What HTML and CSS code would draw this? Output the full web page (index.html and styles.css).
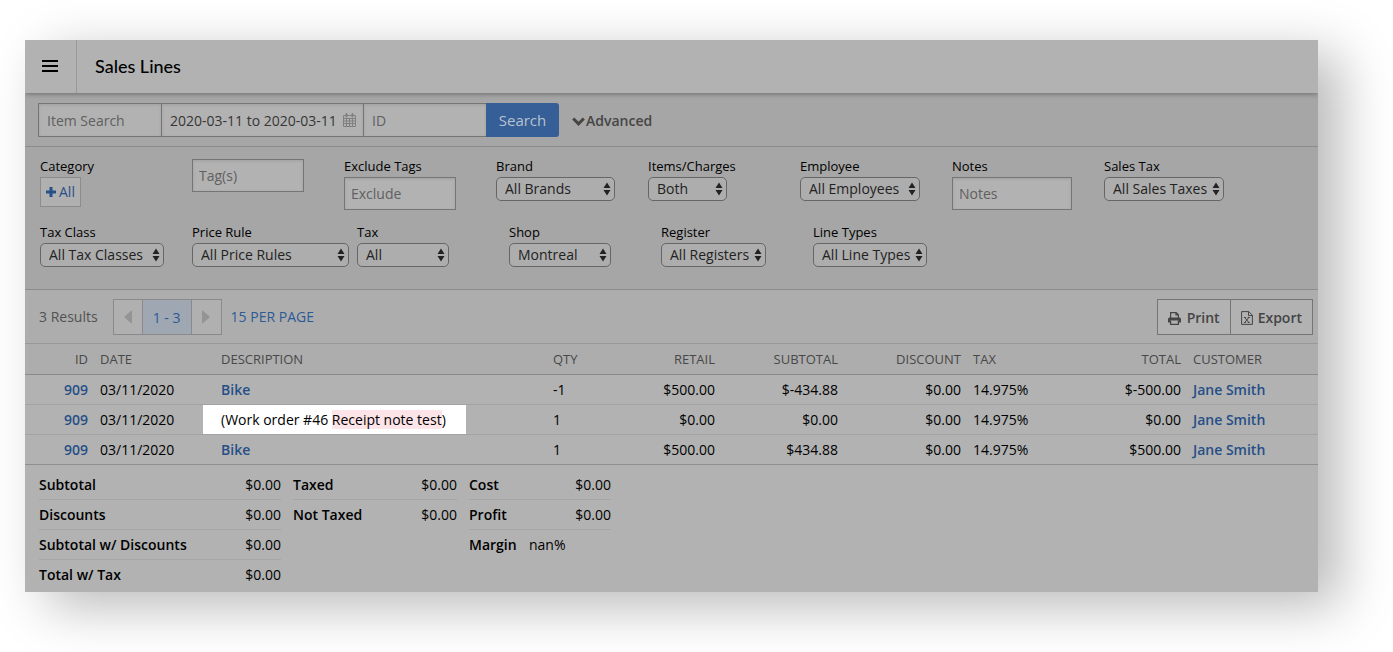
FILE: index.html
```html
<!DOCTYPE html>
<html lang="en">
<head>
<meta charset="utf-8">
<title>Sales Lines</title>
<link rel="stylesheet" href="styles.css">
</head>
<body>
<svg class="defs" aria-hidden="true">
  <symbol id="arrows" viewBox="0 0 8 14"><path d="M4 .5 7.500 6h-7zM4 13.500.5 8h7z"/></symbol>
</svg>
<main class="app">
  <header class="topbar">
    <button class="menu" type="button" aria-label="Menu">
      <svg width="16" height="12" viewBox="0 0 16 12"><path d="M0 0h16v2H0zM0 5h16v2H0zM0 10h16v2H0z"/></svg>
    </button>
    <h1 class="title">Sales Lines</h1>
  </header>

  <form class="search">
    <input class="field search-item" type="text" placeholder="Item Search" aria-label="Item Search">
    <div class="date">
      <input class="field date-input" type="text" value="2020-03-11 to 2020-03-11" aria-label="Date range">
      <svg class="date-icon" width="13" height="14" viewBox="0 0 13 14" fill="none" stroke="currentColor"><path d="M.5 2.500h12v11h-12zM.5 5.500h12M.5 8h12M.5 10.500h12M3.500 5.500v8M6.500 5.500v8M9.500 5.500v8"/><path d="M3.500 1v2.500M9.500 1v2.500" stroke-width="2" stroke-linecap="round"/></svg>
    </div>
    <input class="field search-id" type="text" placeholder="ID" aria-label="ID">
    <button class="search-btn" type="button">Search</button>
    <button class="advanced" type="button">
      <svg width="13" height="9" viewBox="0 0 13 9"><path d="M1.200 1.500l5.300 5.300 5.300-5.300" fill="none" stroke="currentColor" stroke-width="3"/></svg>Advanced
    </button>
  </form>

  <section class="filters">
    <div class="filter"><span class="label">Category</span>
      <button class="add" type="button"><svg width="10" height="10" viewBox="0 0 10 10"><path d="M3.500 0h3v3.500H10v3H6.500V10h-3V6.500H0v-3h3.500z" fill="currentColor"/></svg>All</button></div>
    <div class="filter"><input class="field short" type="text" placeholder="Tag(s)" aria-label="Tags"></div>
    <div class="filter"><label class="label" for="ex">Exclude Tags</label><input class="field short" id="ex" type="text" placeholder="Exclude"></div>
    <div class="filter"><label class="label" for="brand">Brand</label><div class="pick"><select class="w-brand" id="brand"><option>All Brands</option></select><svg class="arrows"><use href="#arrows"/></svg></div></div>
    <div class="filter"><label class="label" for="items">Items/Charges</label><div class="pick"><select class="w-items" id="items"><option>Both</option></select><svg class="arrows"><use href="#arrows"/></svg></div></div>
    <div class="filter"><label class="label" for="emp">Employee</label><div class="pick"><select class="w-emp" id="emp"><option>All Employees</option></select><svg class="arrows"><use href="#arrows"/></svg></div></div>
    <div class="filter"><label class="label" for="notes">Notes</label><input class="field notes" id="notes" type="text" placeholder="Notes"></div>
    <div class="filter"><label class="label" for="stax">Sales Tax</label><div class="pick"><select id="stax"><option>All Sales Taxes</option></select><svg class="arrows"><use href="#arrows"/></svg></div></div>
    <div class="filter"><label class="label" for="tclass">Tax Class</label><div class="pick"><select class="w-class" id="tclass"><option>All Tax Classes</option></select><svg class="arrows"><use href="#arrows"/></svg></div></div>
    <div class="filter"><label class="label" for="rule">Price Rule</label><div class="pick"><select class="w-rule" id="rule"><option>All Price Rules</option></select><svg class="arrows"><use href="#arrows"/></svg></div></div>
    <div class="filter"><label class="label" for="tax">Tax</label><div class="pick"><select class="w-tax" id="tax"><option>All</option></select><svg class="arrows"><use href="#arrows"/></svg></div></div>
    <div class="filter"><label class="label" for="shop">Shop</label><div class="pick"><select class="w-shop" id="shop"><option>Montreal</option></select><svg class="arrows"><use href="#arrows"/></svg></div></div>
    <div class="filter"><label class="label" for="reg">Register</label><div class="pick"><select id="reg"><option>All Registers</option></select><svg class="arrows"><use href="#arrows"/></svg></div></div>
    <div class="filter"><label class="label" for="lt">Line Types</label><div class="pick"><select id="lt"><option>All Line Types</option></select><svg class="arrows"><use href="#arrows"/></svg></div></div>
  </section>

  <section class="results">
    <span class="count">3 Results</span>
    <div class="pager">
      <button class="page-btn" type="button" aria-label="Previous"><svg width="8" height="14" viewBox="0 0 8 14"><path d="M8 0v14L0 7z"/></svg></button>
      <button class="page-btn current" type="button">1 - 3</button>
      <button class="page-btn" type="button" aria-label="Next"><svg width="8" height="14" viewBox="0 0 8 14"><path d="M0 0v14l8-7z"/></svg></button>
    </div>
    <a class="per-page" href="#">15 PER PAGE</a>
    <div class="actions">
      <button class="action" type="button"><svg width="13" height="13" viewBox="0 0 13 13"><path d="M2.600 6V.6h5.600l2.200 2.200V6M8 .6V3h2.400" fill="none" stroke="currentColor" stroke-width="1.200"/><path d="M1.500 5.500h10A1.500 1.500 0 0 1 13 7v3.500h-2v-2H2v2H0V7a1.500 1.500 0 0 1 1.500-1.500z" fill="currentColor"/><path d="M2.600 8.600v3.800h7.800V8.600" fill="none" stroke="currentColor" stroke-width="1.200"/></svg>Print</button>
      <button class="action export" type="button"><svg width="12" height="14" viewBox="0 0 12 14" fill="none" stroke="currentColor"><path d="M.6.600h7.200l3.600 3.600v9.200H.6zM7.500.6v4h4"/><path d="M3.800 6.500l4 5M7.800 6.500l-4 5M2.900 6.500h2M6.700 6.500h2M2.900 11.500h2M6.700 11.500h2"/></svg>Export</button>
    </div>
  </section>

  <table class="lines">
    <colgroup><col class="c-id"><col class="c-date"><col><col class="c-qty"><col class="c-retail"><col class="c-money"><col class="c-money"><col class="c-tax"><col class="c-total"><col class="c-customer"></colgroup>
    <thead><tr><th class="num">ID</th><th>DATE</th><th>DESCRIPTION</th><th>QTY</th><th class="num">RETAIL</th><th class="num">SUBTOTAL</th><th class="num">DISCOUNT</th><th>TAX</th><th class="num">TOTAL</th><th>CUSTOMER</th></tr></thead>
    <tbody>
      <tr><td class="num"><a href="#">909</a></td><td>03/11/2020</td><td><a href="#">Bike</a></td><td>-1</td><td class="num">$500.00</td><td class="num">$-434.88</td><td class="num">$0.00</td><td>14.975%</td><td class="num">$-500.00</td><td><a href="#">Jane Smith</a></td></tr>
      <tr><td class="num"><a href="#">909</a></td><td>03/11/2020</td><td><span class="spot">(Work order #46 <mark>Receipt note test</mark>)</span></td><td>1</td><td class="num">$0.00</td><td class="num">$0.00</td><td class="num">$0.00</td><td>14.975%</td><td class="num">$0.00</td><td><a href="#">Jane Smith</a></td></tr>
      <tr><td class="num"><a href="#">909</a></td><td>03/11/2020</td><td><a href="#">Bike</a></td><td>1</td><td class="num">$500.00</td><td class="num">$434.88</td><td class="num">$0.00</td><td>14.975%</td><td class="num">$500.00</td><td><a href="#">Jane Smith</a></td></tr>
    </tbody>
  </table>

  <section class="totals">
    <table class="sum sum-main">
      <tr><th>Subtotal</th><td>$0.00</td></tr>
      <tr><th>Discounts</th><td>$0.00</td></tr>
      <tr><th>Subtotal w/ Discounts</th><td>$0.00</td></tr>
      <tr><th>Total w/ Tax</th><td>$0.00</td></tr>
    </table>
    <table class="sum sum-tax">
      <tr><th>Taxed</th><td>$0.00</td></tr>
      <tr><th>Not Taxed</th><td>$0.00</td></tr>
    </table>
    <table class="sum sum-cost">
      <tr><th>Cost</th><td>$0.00</td></tr>
      <tr><th>Profit</th><td>$0.00</td></tr>
      <tr><th>Margin</th><td class="margin">nan%</td></tr>
    </table>
  </section>
</main>
</body>
</html>
```
FILE: styles.css
```css
* { box-sizing: border-box; }
body {
  margin: 0;
  padding: 40px 75px 60px 25px;
  background: #fff;
  color: #000;
  font: 14px/20px "Open Sans", sans-serif;
}
button, input, select { font: inherit; margin: 0; }
button { cursor: pointer; }
a { color: #264f87; text-decoration: none; }
svg { display: block; flex: none; }
.defs { position: absolute; width: 0; height: 0; }

.app { background: #b2b2b2; box-shadow: 22px 14px 50px rgba(0, 0, 0, .28); }

.topbar {
  position: relative;
  display: flex;
  height: 53px;
  background: #b2b2b2;
  box-shadow: 0 1px 5px rgba(0, 0, 0, .35);
  clip-path: inset(0 0 -10px 0);
}
.menu {
  display: flex;
  align-items: center;
  justify-content: center;
  width: 52px;
  padding: 0 2px 2px 0;
  border: 0;
  border-right: 1px solid #999;
  background: none;
}
.title { margin: 0 18px; font: 500 18px/53px Lato, sans-serif; }

.search {
  display: flex;
  align-items: center;
  padding: 10px 13px 9px;
  border-bottom: 1px solid #8c8c8c;
  background: #a6a6a6;
}
.field {
  display: block;
  height: 33px;
  padding: 0 6px;
  border: 1px solid #757575;
  border-radius: 0;
  background: #b2b2b2;
  box-shadow: inset 0 1px 3px rgba(0, 0, 0, .1);
  color: #363636;
}
.field::placeholder { color: #606060; opacity: 1; }
.search .field { height: 34px; padding: 0 8px; }
.search-item, .search-id { width: 124px; }
.date { position: relative; margin: 0 -1px; }
.date-input { width: 203px; }
.date-icon { position: absolute; top: 10px; right: 8px; color: #808080; }
.search-btn {
  width: 73px;
  height: 34px;
  margin-left: -1px;
  padding: 0;
  border: 0;
  border-radius: 0 3px 3px 0;
  background: #355f96;
  color: #b8c2ce;
  font-size: 15px;
}
.advanced {
  display: flex;
  align-items: center;
  gap: 1px;
  margin-left: 13px;
  padding: 2px 0 0;
  border: 0;
  background: none;
  color: #454545;
  font-weight: 600;
}

.filters {
  display: flex;
  flex-wrap: wrap;
  gap: 15px 8px;
  padding: 12px 15px 22px;
  border-bottom: 1px solid #8c8c8c;
  background: #a6a6a6;
}
.filter { min-width: 144px; }
.label { display: block; height: 18px; font-size: 13px; line-height: 15px; }
.short { width: 112px; }
.notes { width: 120px; }
.add {
  display: flex;
  align-items: center;
  gap: 3px;
  height: 30px;
  padding: 0 5px;
  border: 1px solid #8c8c8c;
  background: #b0b0b0;
  color: #264f87;
}
.pick { position: relative; width: max-content; }
.pick select {
  display: block;
  height: 24px;
  padding: 0 15px 0 8px;
  border: 1px solid #666;
  border-radius: 5px;
  background: #adadad;
  color: #222;
  line-height: 20px;
  appearance: none;
}
.arrows { position: absolute; top: 5px; right: 4px; width: 8px; height: 14px; fill: #222; pointer-events: none; }
.pick .w-brand { width: 119px; }
.pick .w-items { width: 79px; }
.pick .w-emp { width: 120px; }
.pick .w-class { width: 124px; }
.pick .w-rule { width: 157px; }
.pick .w-tax { width: 92px; }
.pick .w-shop { width: 102px; }

.results {
  display: flex;
  align-items: center;
  padding: 9px 5px 8px 14px;
  border-bottom: 1px solid #999;
  background: #adadad;
}
.count { color: #525252; }
.pager { display: flex; margin: 0 9px 0 15px; }
.page-btn {
  display: flex;
  align-items: center;
  justify-content: center;
  width: 30px;
  height: 36px;
  padding: 0;
  border: 1px solid #8a8a8a;
  background: #b0b0b0;
  fill: #949494;
}
.page-btn + .page-btn { width: 31px; margin-left: -1px; }
.page-btn + .current { width: 50px; padding-top: 2px; background: #9ea7b2; color: #2c5a96; }
.per-page { color: #2c5a96; }
.actions { display: flex; margin-left: auto; }
.action {
  display: flex;
  align-items: center;
  gap: 6px;
  height: 36px;
  padding: 2px 10px 0;
  border: 1px solid #757575;
  background: #b2b2b2;
  color: #454545;
  font-weight: 600;
}
.action + .action { margin-left: -1px; }
.export { gap: 5px; }

.lines { width: 100%; table-layout: fixed; border-collapse: separate; border-spacing: 0; }
.lines th, .lines td { height: 30px; padding: 0 6px; border-bottom: 1px solid #a3a3a3; text-align: left; white-space: nowrap; }
.lines th { height: 31px; border-color: #8a8a8a; background: #adadad; color: #484848; font-size: 13px; font-weight: 400; }
.lines tr:last-child td { border-color: #8f8f8f; }
.lines .num { text-align: right; }
.lines a { font-weight: 600; }
.c-id { width: 69px; }
.c-date { width: 121px; }
.c-qty { width: 60px; }
.c-retail { width: 114px; }
.c-money { width: 123px; }
.c-tax { width: 90px; }
.c-total { width: 130px; }
.c-customer { width: 131px; }
.spot { display: inline-block; margin-left: -18px; padding: 0 20px 0 18px; background: #fff; line-height: 29px; vertical-align: top; }
mark { background: #fde4e9; color: inherit; }

.totals { display: flex; align-items: flex-start; gap: 12px; padding: 5px 14px 2px; }
.sum { border-collapse: separate; border-spacing: 0; }
.sum th, .sum td { height: 30px; padding: 0; border-bottom: 1px solid #a6a6a6; white-space: nowrap; }
.sum th { padding-right: 12px; font-weight: 600; text-align: left; }
.sum td { text-align: right; }
.sum tr:last-child > * { border-bottom-color: transparent; }
.sum .margin { text-align: left; }
.sum-main { width: 242px; }
.sum-tax { width: 164px; }
.sum-cost { width: 142px; }
.sum-cost th { width: 60px; }
```
